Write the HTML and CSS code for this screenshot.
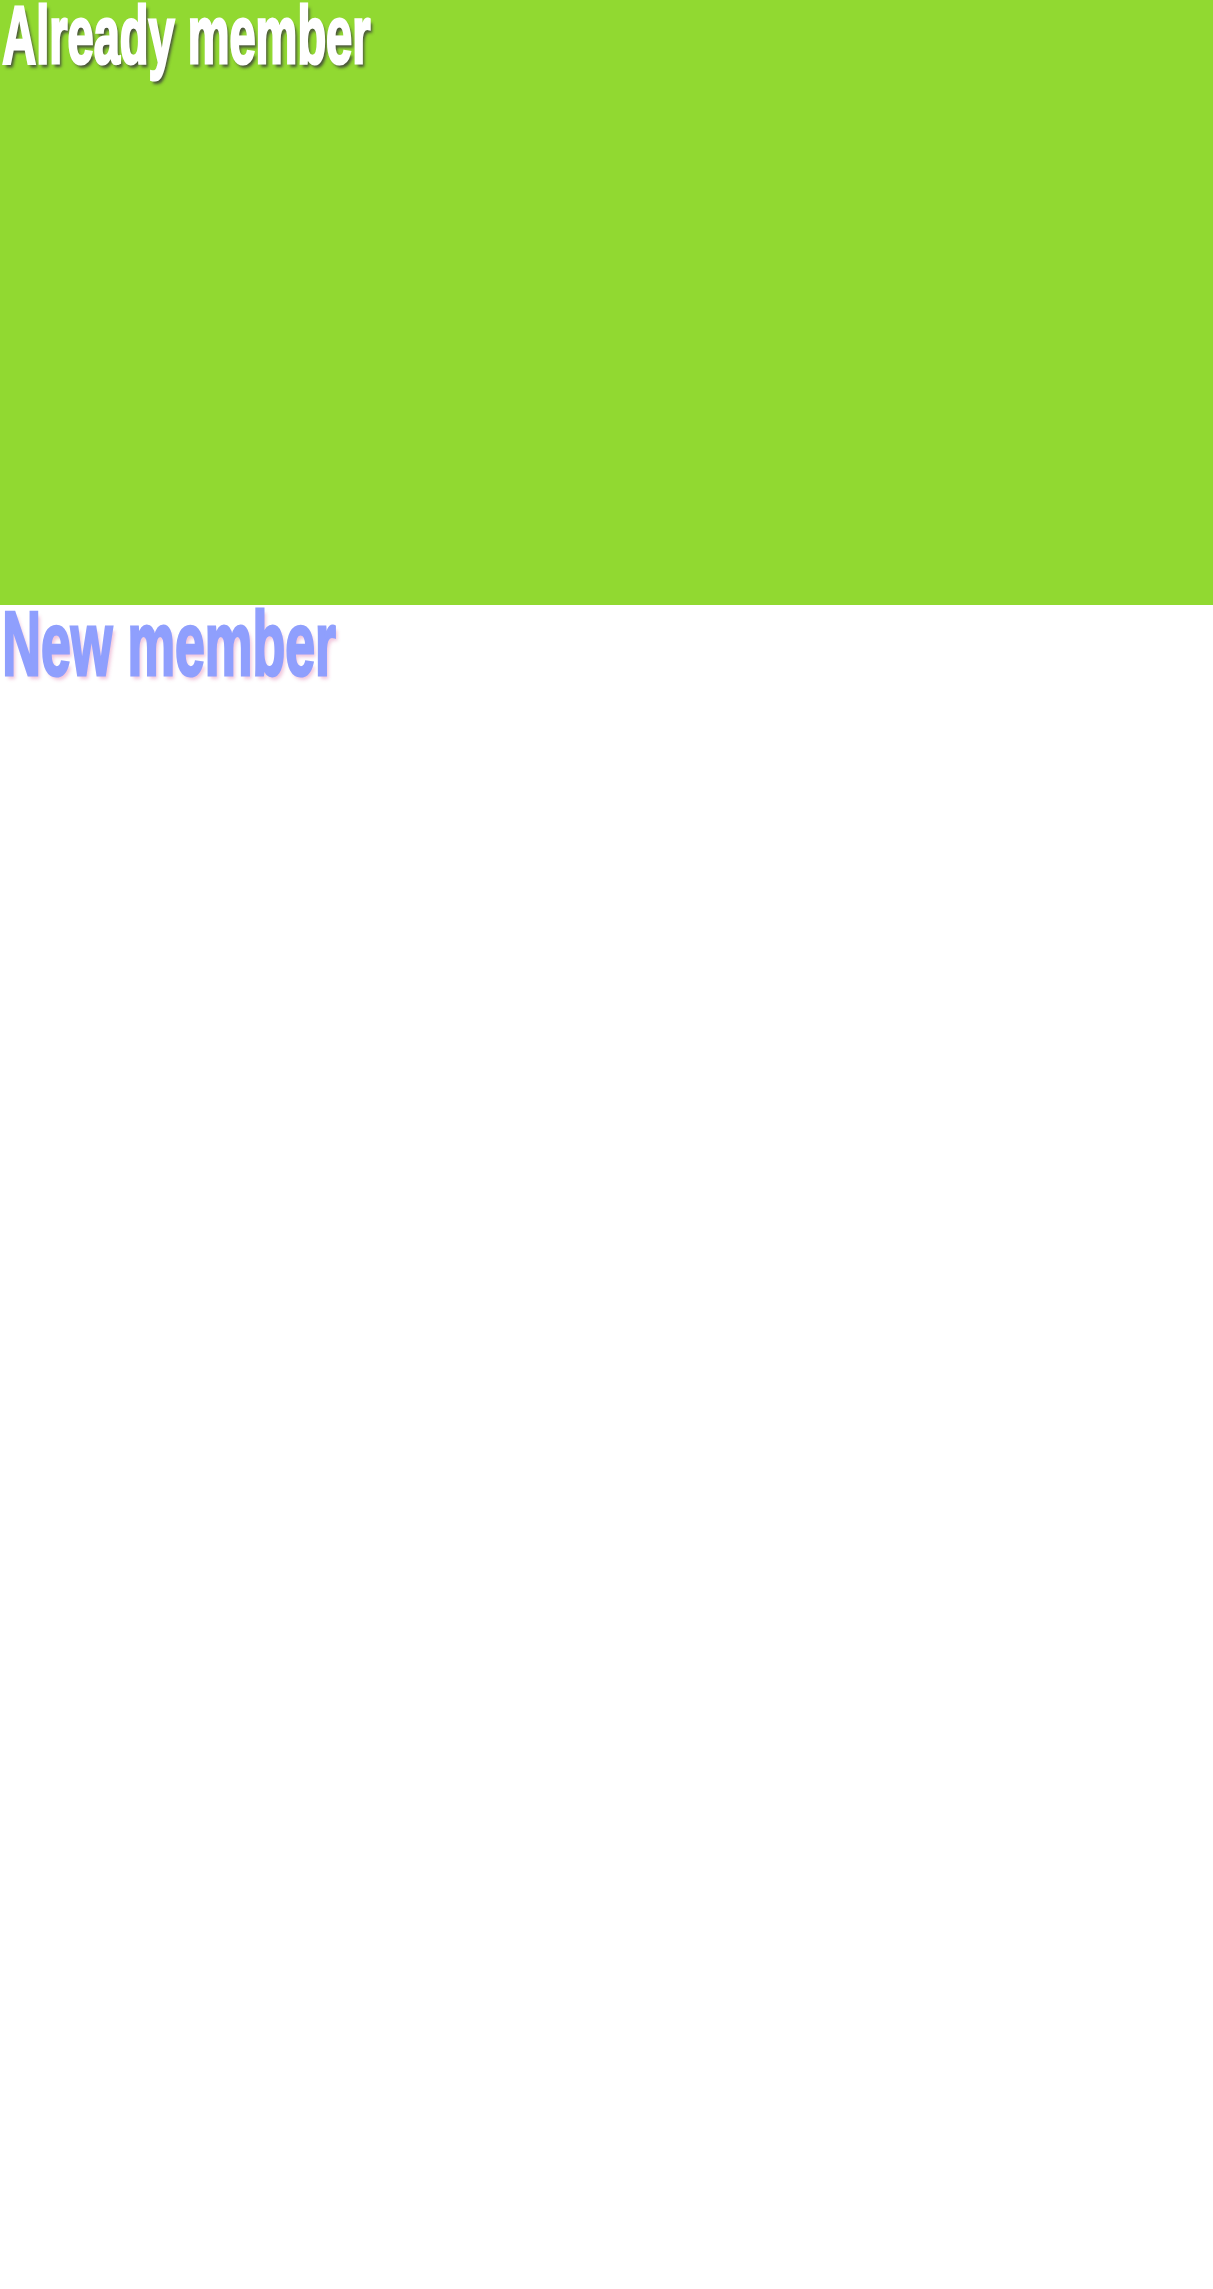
FILE: index.html
```html
<!DOCTYPE html>
<html lang="en">
<head>
<meta charset="utf-8">
<title>Members</title>
<link rel="stylesheet" href="styles.css">
</head>
<body>
<section class="panel panel-login">
  <h1 class="title title-login">Already member</h1>
</section>
<section class="panel panel-new">
  <h1 class="title title-new">New member</h1>
</section>
</body>
</html>
```
FILE: styles.css
```css
html, body {
  margin: 0;
  padding: 0;
  background: #ffffff;
}
body {
  font-family: "Liberation Sans", Arial, sans-serif;
}
.panel {
  width: 100%;
}
.panel-login {
  height: 605px;
  background: #91d931;
}
.panel-new {
  height: 1684px;
  background: #ffffff;
}
.title {
  margin: 0;
  padding-left: 4px;
  width: max-content;
  font-weight: bold;
  white-space: nowrap;
  transform-origin: 0 0;
}
.title-login {
  font-size: 81px;
  line-height: 71px;
  color: #ffffff;
  transform: scaleX(0.58);
  -webkit-text-stroke: 3px #ffffff;
  text-shadow: 4px 4px 4px rgba(60, 60, 60, 0.85);
}
.title-new {
  font-size: 90.8px;
  line-height: 78px;
  color: #8f9ffd;
  transform: scaleX(0.59);
  -webkit-text-stroke: 3px #8f9ffd;
  text-shadow: 4px 4px 5px rgba(240, 190, 215, 0.9);
}
```
